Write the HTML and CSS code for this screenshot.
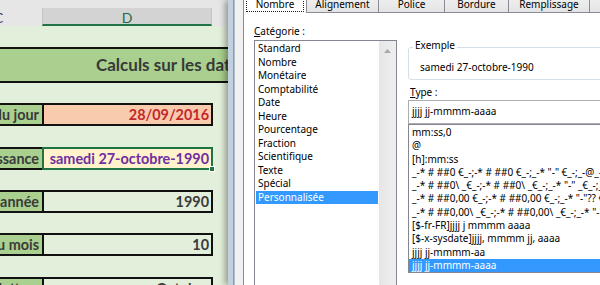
FILE: index.html
```html
<!DOCTYPE html>
<html lang="fr">
<head>
<meta charset="utf-8">
<title>Format de cellule</title>
<link rel="stylesheet" href="styles.css">
</head>
<body>
<div class="screen">
  <div class="sheet">
    <div class="col-headers">
      <div class="ch ch-c">C</div>
      <div class="ch ch-d">D</div>
      <div class="ch ch-e"></div>
    </div>
    <div class="sheet-body">
      <div class="title-row">Calculs sur les dates</div>
      <div class="row">
        <div class="lbl"><span>Date du jour</span></div>
        <div class="val val-today">28/09/2016</div>
      </div>
      <div class="row">
        <div class="lbl"><span>Date de naissance</span></div>
        <div class="val val-birth">samedi 27-octobre-1990<span class="handle"></span></div>
      </div>
      <div class="row">
        <div class="lbl"><span>Extraire l'année</span></div>
        <div class="val">1990</div>
      </div>
      <div class="row">
        <div class="lbl"><span>Numéro du mois</span></div>
        <div class="val">10</div>
      </div>
      <div class="row">
        <div class="lbl"><span>Mois en lettres</span></div>
        <div class="val">Octobre</div>
      </div>
    </div>
  </div>

  <div class="dialog">
    <div class="frame"></div>
    <div class="client">
      <div class="tabs">
        <div class="tab tab-sel"><span class="focus">Nombre</span></div>
        <div class="tab tab-align">Alignement</div>
        <div class="tab tab-police">Police</div>
        <div class="tab tab-bord">Bordure</div>
        <div class="tab tab-rempl">Remplissage</div>
        <div class="tab tab-prot">Protection</div>
      </div>
      <div class="panel">
        <div class="col-left">
          <div class="lab"><u>C</u>atégorie :</div>
          <div class="catlist">
            <ul class="cat-items">
              <li>Standard</li>
              <li>Nombre</li>
              <li>Monétaire</li>
              <li>Comptabilité</li>
              <li>Date</li>
              <li>Heure</li>
              <li>Pourcentage</li>
              <li>Fraction</li>
              <li>Scientifique</li>
              <li>Texte</li>
              <li>Spécial</li>
              <li class="sel">Personnalisée</li>
            </ul>
            <div class="vscroll">
              <svg class="arrow" width="7" height="4" viewBox="0 0 7 4"><polygon points="0,4 3.5,0 7,4" fill="#a8a8a8"/></svg>
            </div>
          </div>
        </div>
        <div class="col-right">
          <div class="group">
            <span class="group-label">Exemple</span>
            <div class="sample">samedi 27-octobre-1990</div>
          </div>
          <div class="lab lab-type"><u>T</u>ype :</div>
          <div class="type-input">jjjj jj-mmmm-aaaa</div>
          <ul class="typelist">
            <li>mm:ss,0</li>
            <li>@</li>
            <li>[h]:mm:ss</li>
            <li>_-* # ##0 €_-;-* # ##0 €_-;_-* "-" €_-;_-@_-</li>
            <li>_-* # ##0\ _€_-;-* # ##0\ _€_-;_-* "-" _€_-;_-@_-</li>
            <li>_-* # ##0,00 €_-;-* # ##0,00 €_-;_-* "-"?? €_-;_-@_-</li>
            <li>_-* # ##0,00\ _€_-;-* # ##0,00\ _€_-;_-* "-"?? _€_-;_-@_-</li>
            <li>[$-fr-FR]jjjj j mmmm aaaa</li>
            <li>[$-x-sysdate]jjjj, mmmm jj, aaaa</li>
            <li>jjjj jj-mmmm-aa</li>
            <li class="sel">jjjj jj-mmmm-aaaa</li>
          </ul>
        </div>
      </div>
    </div>
  </div>
</div>
</body>
</html>
```

FILE: styles.css
```css
html, body {
  margin: 0;
  padding: 0;
}
body {
  width: 600px;
  height: 285px;
  overflow: hidden;
  background: #fff;
}
.screen {
  display: flex;
  width: 600px;
  height: 285px;
  overflow: hidden;
}

/* ---------- Spreadsheet ---------- */
.sheet {
  flex: 0 0 228px;
  width: 228px;
  background: #e2efda;
  overflow: hidden;
  font-family: Lato, "Liberation Sans", sans-serif;
  color: #3a3a3a;
}
.col-headers {
  display: flex;
  height: 26px;
  padding-top: 8px;
  box-sizing: border-box;
  background: #e6e6e6;
}
.ch {
  height: 18px;
  box-sizing: border-box;
  font-size: 14px;
  line-height: 19px;
  white-space: nowrap;
}
.ch-c {
  flex: 0 0 42px;
  text-indent: -6px;
  color: #444;
  overflow: hidden;
}
.ch-d {
  flex: 0 0 170px;
  background: #d3d3d3;
  border-left: 1px solid #c4c4c4;
  border-right: 1px solid #c4c4c4;
  border-bottom: 2px solid #217346;
  text-align: center;
  color: #1d6a40;
}
.ch-e {
  flex: 1;
}
.sheet-body {
  display: flex;
  flex-direction: column;
  padding-top: 20.67px;
  gap: 20.33px;
}
.title-row {
  height: 36.33px;
  box-sizing: border-box;
  border-top: 2px solid #111;
  border-bottom: 2px solid #111;
  background: #a9d08e;
  white-space: nowrap;
  padding-left: 96px;
  font-weight: 700;
  font-size: 17px;
  line-height: 32.33px;
  color: #383838;
}
.row {
  display: flex;
  height: 23px;
  width: 213px;
  font-weight: 700;
  font-size: 14.4px;
  line-height: 19px;
  white-space: nowrap;
}
.lbl {
  flex: 0 0 44px;
  box-sizing: border-box;
  border: 2px solid #111;
  border-left: none;
  background: #a9d08e;
  display: flex;
  justify-content: flex-end;
  overflow: hidden;
  padding-right: 3px;
}
.lbl span {
  flex: none;
}
.val {
  flex: 0 0 169px;
  box-sizing: border-box;
  border: 2px solid #111;
  border-left: none;
  text-align: right;
  padding-right: 2px;
  overflow: hidden;
}
.val-today {
  background: #f8cbad;
  color: #c3262c;
}
.val-birth {
  position: relative;
  overflow: visible;
  background: #fff2cc;
  color: #7030a0;
  border: 2px solid #217346;
  margin-left: -2px;
  flex-basis: 171px;
}
.handle {
  position: absolute;
  right: -4px;
  bottom: -4px;
  width: 4px;
  height: 4px;
  background: #217346;
  border: 1px solid #fff;
}

/* ---------- Dialog ---------- */
.dialog {
  flex: 1;
  display: flex;
  position: relative;
  z-index: 1;
  overflow: hidden;
  box-shadow: -3px 0 6px rgba(0, 0, 0, 0.35);
  font-family: "Noto Sans", "Open Sans", sans-serif;
  font-size: 10px;
  color: #000;
}
.frame {
  flex: 0 0 7px;
  background: linear-gradient(to right, #c3d1df 0 5px, #8a9bb0 5px 6px, #b3c1cf 6px 7px);
}
.client {
  flex: 1;
  min-width: 0;
  background: #f0f0f0;
  padding-left: 8px;
  display: flex;
  flex-direction: column;
  overflow: hidden;
}
.tabs {
  display: flex;
  height: 12px;
  flex: none;
}
.tab {
  flex: none;
  height: 20px;
  margin-top: -8px;
  margin-left: -1px;
  box-sizing: border-box;
  border: 1px solid #898c95;
  border-bottom: none;
  background: linear-gradient(#f3f3f3, #e4e4e4);
  display: flex;
  align-items: flex-end;
  justify-content: center;
  line-height: 13px;
  padding-bottom: 1px;
  white-space: nowrap;
}
.tab-sel {
  width: 64px;
  height: 21px;
  margin-left: 0;
  background: #fff;
  position: relative;
  z-index: 1;
  padding: 0 2px 1px;
}
.focus {
  display: block;
  width: 100%;
  box-sizing: border-box;
  border: 1px dotted #222;
  text-align: center;
  line-height: 13px;
}
.tab-align { width: 73px; }
.tab-police { width: 67px; }
.tab-bord { width: 65px; }
.tab-rempl { width: 82px; }
.tab-prot { width: 80px; }

.panel {
  flex: 1;
  display: flex;
  gap: 11px;
  width: 420px;
  background: #fff;
  border-top: 1px solid #898c95;
  border-left: 1px solid #898c95;
  padding-left: 10px;
}
.lab {
  line-height: 14px;
  white-space: nowrap;
}
.lab u {
  text-underline-offset: 1px;
}
.col-left {
  flex: 0 0 143px;
}
.col-left .lab {
  margin-top: 11px;
}
.catlist {
  margin-top: 2px;
  height: 260px;
  box-sizing: border-box;
  border: 1px solid #828790;
  display: flex;
}
.cat-items {
  list-style: none;
  margin: 0;
  padding: 1px 0 0 1px;
  flex: 1;
}
.cat-items li {
  line-height: 13.5px;
  padding-left: 2px;
  white-space: nowrap;
}
.sel {
  background: #3399ff;
  color: #fff;
}
.vscroll {
  flex: 0 0 17px;
  margin-left: 1px;
  background: linear-gradient(to right, #e6e6e6, #efefef);
  display: flex;
  justify-content: center;
  align-items: flex-start;
  padding-top: 8px;
  box-sizing: border-box;
}
.arrow {
  display: block;
}

.col-right {
  flex: 0 0 250px;
}
.group {
  margin-top: 34px;
  height: 33px;
  box-sizing: border-box;
  border: 1px solid #d5dfe5;
  border-radius: 3px;
  padding-left: 11px;
}
.group-label {
  display: block;
  width: max-content;
  margin: -9px 0 0 -7px;
  padding: 0 2px;
  background: #fff;
  line-height: 12px;
}
.sample {
  margin-top: 9px;
  line-height: 14px;
  white-space: nowrap;
}
.lab-type {
  margin-top: 5px;
  padding-left: 2px;
}
.type-input {
  margin-top: 1px;
  height: 24px;
  box-sizing: border-box;
  border: 1px solid #abadb3;
  padding: 3px 3px;
  line-height: 14px;
  white-space: nowrap;
}
.typelist {
  list-style: none;
  margin: 0;
  padding: 1px 0 0 0;
  border: 1px solid #828790;
}
.typelist li {
  line-height: 13.3px;
  padding-left: 3px;
  white-space: nowrap;
  overflow: hidden;
}
```
